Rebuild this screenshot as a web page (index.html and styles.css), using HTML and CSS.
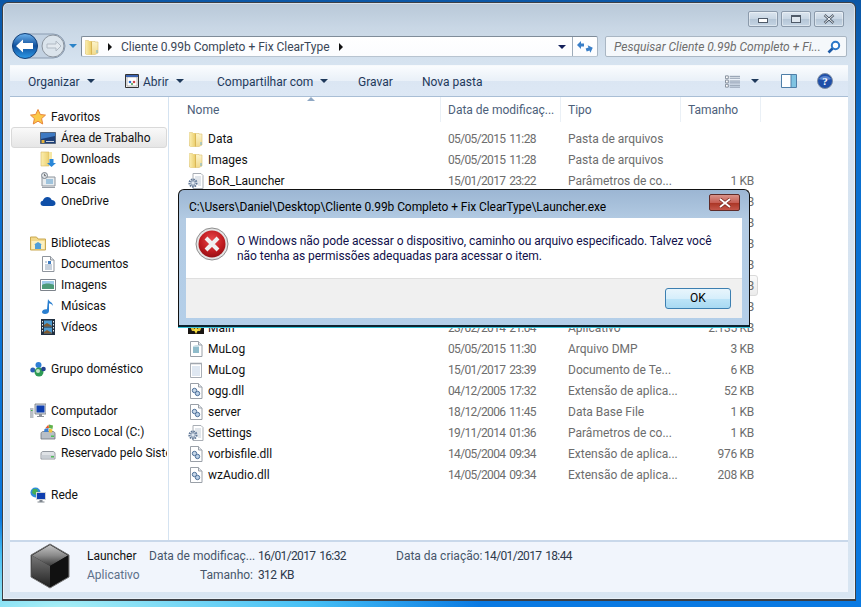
FILE: index.html
```html
<!DOCTYPE html>
<html lang="pt-BR">
<head>
<meta charset="utf-8">
<title>Cliente 0.99b Completo + Fix ClearType</title>
<link rel="stylesheet" href="styles.css">
</head>
<body>
<svg class="defs" width="0" height="0" aria-hidden="true">
  <defs>
    <linearGradient id="fy" x1="0" y1="0" x2="1" y2="0"><stop offset="0" stop-color="#fbeeb0"/><stop offset="1" stop-color="#ecd070"/></linearGradient>
    <linearGradient id="fy2" x1="0" y1="0" x2="0" y2="1"><stop offset="0" stop-color="#fdf6cf"/><stop offset="1" stop-color="#f1da8c"/></linearGradient>
    <radialGradient id="red" cx=".5" cy=".35" r=".7"><stop offset="0" stop-color="#e8484a"/><stop offset=".6" stop-color="#c01c20"/><stop offset="1" stop-color="#8f0d12"/></radialGradient>
    <linearGradient id="backb" x1="0" y1="0" x2="0" y2="1"><stop offset="0" stop-color="#6fb4ee"/><stop offset=".5" stop-color="#0f4f9c"/><stop offset="1" stop-color="#2f9be8"/></linearGradient>
    <linearGradient id="cube" x1="0" y1="0" x2="0" y2="1"><stop offset="0" stop-color="#c4c4c4"/><stop offset=".5" stop-color="#8a8a8a"/><stop offset="1" stop-color="#3a3a3a"/></linearGradient>
    <linearGradient id="cubel" x1="0" y1="0" x2="0" y2="1"><stop offset="0" stop-color="#777"/><stop offset="1" stop-color="#222"/></linearGradient>
    <symbol id="i-folder" viewBox="0 0 16 16"><path d="M1.500 1.500h3l.5 1h6v.5h3V14l-3 1.500H2.500L1.500 15z" fill="url(#fy2)" stroke="#dcc16e" stroke-width=".6"/><path d="M1.500 2h5.500v13.500H2z" fill="url(#fy)"/><path d="M7 2.500h1v13H7z" fill="#d9b655"/><path d="M13.500 11v3h-1v-3z" fill="#6fb4e0"/></symbol>
    <symbol id="i-gear" viewBox="0 0 16 16"><path d="M5 .5h8l2 2v13H5z" fill="#fff" stroke="#a9aeb5"/><path d="M7 4h6M7 6h6M9 8h4M10 10h3M10 12h3" stroke="#c3ccd6"/><circle cx="5" cy="10" r="3.600" fill="none" stroke="#5d7595" stroke-width="2" stroke-dasharray="1.600 .8"/><circle cx="5" cy="10" r="2.200" fill="#dfe7f0" stroke="#6d83a0" stroke-width=".8"/></symbol>
    <symbol id="i-dll" viewBox="0 0 16 16"><path d="M2.500 .5h8l3.500 3.500v11.500H2.500z" fill="#fff" stroke="#9aa0a8"/><path d="M10.500 .5v3.500H14" fill="#e6e9ee" stroke="#9aa0a8"/><circle cx="6.500" cy="7.500" r="2.200" fill="#c7d7e8" stroke="#4e7099"/><circle cx="9.500" cy="10.500" r="2.200" fill="#b9cfe6" stroke="#4e7099"/></symbol>
    <symbol id="i-dmp" viewBox="0 0 16 16"><path d="M2.500 .5h8l3.500 3.500v11.500H2.500z" fill="#fff" stroke="#9aa0a8"/><path d="M10.500 .5v3.500H14" fill="#e6e9ee" stroke="#9aa0a8"/><path d="M5 5h6v7H5z" fill="#8fbccb"/><path d="M5 5l3-1h3v2H5z" fill="#c9dee6"/></symbol>
    <symbol id="i-txt" viewBox="0 0 16 16"><path d="M2.500 1.500h11v14h-11z" fill="#fff" stroke="#a9aeb5"/><path d="M3 .5v2M5 .5v2M7 .5v2M9 .5v2M11 .5v2M13 .5v2" stroke="#9aa0a8"/><path d="M4 5h8M4 7h8M4 9h8M4 11h8M4 13h8" stroke="#bfd0e4"/></symbol>
    <symbol id="i-main" viewBox="0 0 16 16"><path d="M0 3h16v11H0z" fill="#191512"/><path d="M1 4l7 6 7-6-3 7H4z" fill="#e0c33b"/><path d="M8 7l2 3-2 4-2-4z" fill="#f3dc3f"/></symbol>
    <symbol id="i-exe" viewBox="0 0 16 16"><path d="M1.500 1.500h13v13h-13z" fill="#f4f4f4" stroke="#333"/><path d="M3 4h10v9H3z" fill="#fff" stroke="#8a8a8a" stroke-width=".6"/><path d="M2 2h12v2H2z" fill="#3a62b0"/><circle cx="6" cy="9" r="1.300" fill="#2b6fd0"/><circle cx="10" cy="9" r="1.300" fill="#d04848"/><circle cx="8" cy="11" r="1" fill="#3c9b4a"/></symbol>
    <symbol id="i-star" viewBox="0 0 16 16"><path d="M8 .5l2.300 5 5.200.6-3.900 3.500 1.100 5.400L8 12.200l-4.700 2.800 1.100-5.400L.5 6.100l5.200-.6z" fill="#fbc94a" stroke="#e8853a"/></symbol>
    <symbol id="i-desk" viewBox="0 0 16 16"><path d="M.5 2.500h15v11H.5z" fill="#1d3f78" stroke="#54657c"/><path d="M1 3h14v3L1 9z" fill="#3d79c2"/><path d="M6 11h8v1H6z" fill="#c8d2de"/><path d="M1.500 10h3v3h-3z" fill="#e5b23a"/></symbol>
    <symbol id="i-down" viewBox="0 0 16 16"><path d="M1 1h8v14H1z" fill="url(#fy)" stroke="#d8bb63" stroke-width=".6"/><path d="M9 1h3v7H9z" fill="#f6e7a6"/><path d="M9.500 8h4v4H16l-4.500 4L7 12h2.500z" fill="#2a87d8"/></symbol>
    <symbol id="i-places" viewBox="0 0 16 16"><path d="M2 5h13v9H2z" fill="#e8ecef" stroke="#8d949c"/><path d="M6 7h7v5H6z" fill="#9fc3dc"/><path d="M2 15h13v1H2z" fill="#9aa0a8"/><circle cx="4.500" cy="3.500" r="3" fill="#dfe3e7" stroke="#7d858e"/><path d="M4.500 1.800v1.900h1.500" fill="none" stroke="#444" stroke-width=".7"/></symbol>
    <symbol id="i-cloud" viewBox="0 0 16 16"><path d="M3.500 13C1.500 13 .5 11.700.5 10.300.5 9 1.500 8 2.800 7.800 3.500 5.500 5.300 4 7.500 4c2 0 3.500 1 4.200 3 2.100 0 3.800 1.400 3.800 3.200 0 1.700-1.300 2.800-3 2.800z" fill="#0f4fa8"/></symbol>
    <symbol id="i-libs" viewBox="0 0 16 16"><path d="M.5 2h6l1.500 2h7.500v11H.5z" fill="#f3d98a" stroke="#c9a850"/><path d="M1.500 6h13v8h-13z" fill="#fbf0c0"/><path d="M5 14V9.500h6V14M4 9.500L8 7l4 2.500z" fill="#4f9fd8"/></symbol>
    <symbol id="i-doc" viewBox="0 0 16 16"><path d="M2.500 .5h8l3.500 3.500v11.500H2.500z" fill="#fff" stroke="#8f959d"/><path d="M10.500.5v3.500H14" fill="#dfe3e8" stroke="#8f959d"/><path d="M8 5h3v3H8z" fill="#3f7cc0"/><path d="M5 9h7M5 11h7M5 13h7M5 6h2" stroke="#8fa3bb"/></symbol>
    <symbol id="i-img" viewBox="0 0 16 16"><path d="M.5 2.500h15v11H.5z" fill="#fff" stroke="#7d838b"/><path d="M2 4h12v4H2z" fill="#9fcbe8"/><path d="M2 8c3-2 8-2 12 0v4H2z" fill="#4c9b78"/></symbol>
    <symbol id="i-music" viewBox="0 0 16 16"><path d="M8 1c1 3 5 3 5 7-1-2-3-2.500-4-2.500V13c0 1.700-1.800 3-4 3-1.700 0-3-.8-3-2 0-1.500 1.800-2.800 4-2.800.4 0 .8 0 1 .1z" fill="#2a7fd0"/></symbol>
    <symbol id="i-film" viewBox="0 0 16 16"><path d="M1 0h14v16H1z" fill="#223041"/><path d="M4 1.500h8v6H4zM4 8.500h8v6H4z" fill="#4d9ad0"/><path d="M4 6l3-2 5 3v.5H4zM4 13l3-2 5 3v.500H4z" fill="#7f5a30"/><path d="M2 2h1v1.500H2zM2 5h1v1.500H2zM2 8h1v1.500H2zM2 11h1v1.500H2zM13 2h1v1.500h-1zM13 5h1v1.500h-1zM13 8h1v1.500h-1zM13 11h1v1.500h-1z" fill="#e8eef4"/></symbol>
    <symbol id="i-home" viewBox="0 0 16 16"><circle cx="2.800" cy="9" r="2.500" fill="#2a5fb5"/><circle cx="8.500" cy="4" r="3" fill="#2f7fd6"/><circle cx="9" cy="11" r="4.500" fill="#2f9b55"/><circle cx="13.500" cy="8" r="2.300" fill="#23408f"/><circle cx="8" cy="10" r="2" fill="#c5e6c8"/></symbol>
    <symbol id="i-pc" viewBox="0 0 16 16"><path d="M5 1h11v10H5z" fill="#d9dde2" stroke="#6f767e" stroke-width=".8"/><path d="M6.500 2.500h8v7h-8z" fill="#0f3fb0"/><path d="M9 11h3v2h2v1H7v-1h2z" fill="#8b9199"/><path d="M0 5h3.500v10H0z" fill="#b9bfc5"/><path d="M1 7h1.500v1H1z" fill="#3cae4a"/></symbol>
    <symbol id="i-disk" viewBox="0 0 16 16"><path d="M1 9.500c0-1 1-2 2-2h10c1 0 2 1 2 2V15H1z" fill="#b8bfc7" stroke="#6c737b" stroke-width=".8"/><path d="M11 11.500h3V13h-3z" fill="#4bbf58"/><path d="M5 4.500L8.500 .5 9 4z" fill="#e45a2e"/><path d="M9 .5l4 1-.5 3.500-3.500-1z" fill="#62b24c"/><path d="M4.500 5L8.500 4 8.500 8 4 8z" fill="#3d80d0"/><path d="M9 4.500l3.500 1-.5 3H8.800z" fill="#f2c33a"/></symbol>
    <symbol id="i-disk2" viewBox="0 0 16 16"><path d="M1 8.500c0-1 1-2 2-2h10c1 0 2 1 2 2V14H1z" fill="#dfe2e6" stroke="#7b8289" stroke-width=".8"/><path d="M1.500 10h13v3.500h-13z" fill="#c9ced4"/><path d="M11 11h3v1.500h-3z" fill="#52b85c"/></symbol>
    <symbol id="i-net" viewBox="0 0 16 16"><circle cx="5.500" cy="5.500" r="5" fill="#2e8dd8"/><path d="M3 2l4 0 1 3-3 3-3-2z" fill="#46ae52"/><path d="M6 5h10v8H6z" fill="#cfd4da"/><path d="M7 6h8v6H7z" fill="#0f3fb0"/><path d="M9.500 13h3v1.500h2v1h-7v-1h2z" fill="#7f868e"/></symbol>
  </defs>
</svg>

<main class="window">
  <div class="caption">
    <div class="caption-btn"><span class="glyph-min"></span></div>
    <div class="caption-btn"><span class="glyph-max"></span></div>
    <div class="caption-btn caption-x">
      <svg width="12" height="10" viewBox="0 0 12 10"><path d="M1.500 1l9 8M10.500 1l-9 8" stroke="#4f5a68" stroke-width="2.400"/><path d="M1.500 1l9 8M10.500 1l-9 8" stroke="#f2f5f8" stroke-width="1"/></svg>
    </div>
  </div>

  <div class="nav">
    <div class="nav-buttons">
      <svg width="68" height="28" viewBox="0 0 68 28">
        <path d="M14 2h28a11 11 0 0 1 0 24H14z" fill="#c3d2e2" stroke="#8a9bb0"/>
        <circle cx="14" cy="14" r="12.500" fill="url(#backb)" stroke="#123f78"/>
        <path d="M5 14l7-6.500V11h10v6H12v3.500z" fill="#fff"/>
        <circle cx="42" cy="14" r="11" fill="#dbe4ec" stroke="#8b949e"/>
        <path d="M50 14l-5-5v3h-9v4h9v3z" fill="#e3e9ef" stroke="#b1bac4"/>
        <path d="M58 12h8l-4 4z" fill="#2a83c8"/>
      </svg>
    </div>
    <div class="address">
      <svg class="ic addr-folder" width="16" height="16"><use href="#i-folder"/></svg>
      <span class="crumb-arrow first"></span>
      <span class="crumb">Cliente 0.99b Completo + Fix ClearType</span>
      <span class="crumb-arrow"></span>
      <span class="spacer"></span>
      <span class="drop-arrow"></span>
      <span class="refresh">
        <svg width="16" height="14" viewBox="0 0 16 14"><path d="M0 5l4-4v2.500h3v3H4V9z" fill="#3a7fc8"/><path d="M16 9l-4 4v-2.500H9v-3h3V5z" fill="#3a7fc8" transform="rotate(-20 12 9)"/></svg>
      </span>
    </div>
    <div class="search">
      <span class="search-text">Pesquisar Cliente 0.99b Completo + Fi...</span>
      <svg width="14" height="14" viewBox="0 0 14 14"><circle cx="8.500" cy="5.500" r="3.700" fill="#fff" stroke="#2c78c8" stroke-width="2"/><path d="M5.500 8.500L1.500 12.500" stroke="#1d5aa6" stroke-width="2.600"/></svg>
    </div>
  </div>

  <div class="toolbar">
    <div class="tool t-org">Organizar<span class="tri"></span></div>
    <div class="tool t-open"><svg class="ic" width="16" height="16"><use href="#i-exe"/></svg><span class="open-label">Abrir</span><span class="tri"></span></div>
    <div class="tool t-share">Compartilhar com<span class="tri"></span></div>
    <div class="tool t-burn">Gravar</div>
    <div class="tool t-new">Nova pasta</div>
    <span class="spacer"></span>
    <svg class="view-ic" width="15" height="13" viewBox="0 0 16 13"><path d="M.5.500h3v3h-3zM.5 5h3v3h-3zM.5 9.500h3v3h-3z" fill="#fff" stroke="#7f8a98"/><path d="M5 1h11M5 3h11M5 6h11M5 8h11M5 10.500h11M5 12.500h11" stroke="#8593a5"/></svg>
    <span class="tri view-tri"></span>
    <svg class="pane-ic" width="16" height="14" viewBox="0 0 16 14"><path d="M.5.500h15v13H.5z" fill="#fff" stroke="#4f7fa8"/><path d="M10 1h5v12h-5z" fill="#7fc3e2"/><path d="M10 .5v13" stroke="#4f7fa8"/></svg>
    <svg class="help-ic" width="16" height="16" viewBox="0 0 16 16"><circle cx="8" cy="8" r="7.500" fill="#1f4fa8" stroke="#7f8ea3"/><path d="M2 6c2-4 10-4 12 0-3 1.500-9 1.500-12 0z" fill="#5a85cf"/><text class="help-q" x="8" y="12" text-anchor="middle">?</text></svg>
  </div>

  <div class="body">
    <nav class="sidebar">
      <div class="group">
        <div class="nav-head"><svg class="ic" width="16" height="16"><use href="#i-star"/></svg>Favoritos</div>
        <div class="nav-item selected"><svg class="ic" width="16" height="16"><use href="#i-desk"/></svg>Área de Trabalho</div>
        <div class="nav-item"><svg class="ic" width="16" height="16"><use href="#i-down"/></svg>Downloads</div>
        <div class="nav-item"><svg class="ic" width="16" height="16"><use href="#i-places"/></svg>Locais</div>
        <div class="nav-item"><svg class="ic" width="16" height="16"><use href="#i-cloud"/></svg>OneDrive</div>
      </div>
      <div class="group">
        <div class="nav-head"><svg class="ic" width="16" height="16"><use href="#i-libs"/></svg>Bibliotecas</div>
        <div class="nav-item"><svg class="ic" width="16" height="16"><use href="#i-doc"/></svg>Documentos</div>
        <div class="nav-item"><svg class="ic" width="16" height="16"><use href="#i-img"/></svg>Imagens</div>
        <div class="nav-item"><svg class="ic" width="16" height="16"><use href="#i-music"/></svg>Músicas</div>
        <div class="nav-item"><svg class="ic" width="16" height="16"><use href="#i-film"/></svg>Vídeos</div>
      </div>
      <div class="group">
        <div class="nav-head"><svg class="ic" width="16" height="16"><use href="#i-home"/></svg>Grupo doméstico</div>
      </div>
      <div class="group">
        <div class="nav-head"><svg class="ic" width="16" height="16"><use href="#i-pc"/></svg>Computador</div>
        <div class="nav-item"><svg class="ic" width="16" height="16"><use href="#i-disk"/></svg>Disco Local (C:)</div>
        <div class="nav-item"><svg class="ic" width="16" height="16"><use href="#i-disk2"/></svg>Reservado pelo Sistema</div>
      </div>
      <div class="group">
        <div class="nav-head"><svg class="ic" width="16" height="16"><use href="#i-net"/></svg>Rede</div>
      </div>
    </nav>

    <section class="files">
      <div class="list-head">
        <span class="sort-tri"></span>
        <div class="hcell">Nome</div>
        <div class="hcell">Data de modificaç...</div>
        <div class="hcell">Tipo</div>
        <div class="hcell">Tamanho</div>
      </div>
      <div class="row"><div class="name"><svg class="ic" width="16" height="16"><use href="#i-folder"/></svg>Data</div><div class="meta date">05/05/2015 11:28</div><div class="meta">Pasta de arquivos</div><div class="size"></div></div>
      <div class="row"><div class="name"><svg class="ic" width="16" height="16"><use href="#i-folder"/></svg>Images</div><div class="meta date">05/05/2015 11:28</div><div class="meta">Pasta de arquivos</div><div class="size"></div></div>
      <div class="row"><div class="name"><svg class="ic" width="16" height="16"><use href="#i-gear"/></svg>BoR_Launcher</div><div class="meta date">15/01/2017 23:22</div><div class="meta">Parâmetros de co...</div><div class="size">1 KB</div></div>
      <div class="row"><div class="size-only">1 KB</div></div>
      <div class="row"><div class="size-only">1 KB</div></div>
      <div class="row"><div class="size-only">1 KB</div></div>
      <div class="row"><div class="size-only">1 KB</div></div>
      <div class="row row-sel"><div class="size-only">312 KB</div></div>
      <div class="row"><div class="size-only">1 KB</div></div>
      <div class="row"><div class="name"><svg class="ic" width="16" height="16"><use href="#i-main"/></svg>Main</div><div class="meta date">23/02/2014 21:04</div><div class="meta">Aplicativo</div><div class="size">2.135 KB</div></div>
      <div class="row"><div class="name"><svg class="ic" width="16" height="16"><use href="#i-dmp"/></svg>MuLog</div><div class="meta date">05/05/2015 11:30</div><div class="meta">Arquivo DMP</div><div class="size">3 KB</div></div>
      <div class="row"><div class="name"><svg class="ic" width="16" height="16"><use href="#i-txt"/></svg>MuLog</div><div class="meta date">15/01/2017 23:39</div><div class="meta">Documento de Te...</div><div class="size">6 KB</div></div>
      <div class="row"><div class="name"><svg class="ic" width="16" height="16"><use href="#i-dll"/></svg>ogg.dll</div><div class="meta date">04/12/2005 17:32</div><div class="meta">Extensão de aplica...</div><div class="size">52 KB</div></div>
      <div class="row"><div class="name"><svg class="ic" width="16" height="16"><use href="#i-dll"/></svg>server</div><div class="meta date">18/12/2006 11:45</div><div class="meta">Data Base File</div><div class="size">1 KB</div></div>
      <div class="row"><div class="name"><svg class="ic" width="16" height="16"><use href="#i-gear"/></svg>Settings</div><div class="meta date">19/11/2014 01:36</div><div class="meta">Parâmetros de co...</div><div class="size">1 KB</div></div>
      <div class="row"><div class="name"><svg class="ic" width="16" height="16"><use href="#i-dll"/></svg>vorbisfile.dll</div><div class="meta date">14/05/2004 09:34</div><div class="meta">Extensão de aplica...</div><div class="size">976 KB</div></div>
      <div class="row"><div class="name"><svg class="ic" width="16" height="16"><use href="#i-dll"/></svg>wzAudio.dll</div><div class="meta date">14/05/2004 09:34</div><div class="meta">Extensão de aplica...</div><div class="size">208 KB</div></div>
    </section>
  </div>

  <footer class="details">
    <svg class="cube" width="42" height="46" viewBox="0 0 42 46">
      <path d="M21 1l19 11v22L21 45 2 34V12z" fill="#1c1c1c" stroke="#777"/>
      <path d="M21 2l18 10.500L21 23 3 12.500z" fill="url(#cube)"/>
      <path d="M21 23v21L3 33.500v-21z" fill="url(#cubel)"/>
      <path d="M21 23v21l18-10.500v-21z" fill="#111"/>
    </svg>
    <div class="d-col d-name"><div class="d-title">Launcher</div><div class="d-sub">Aplicativo</div></div>
    <div class="d-col d-labels"><div>Data de modificaç...</div><div>Tamanho:</div></div>
    <div class="d-col d-values"><div>16/01/2017 16:32</div><div>312 KB</div></div>
    <div class="d-col d-labels2"><div>Data da criação:</div></div>
    <div class="d-col d-values"><div>14/01/2017 18:44</div></div>
  </footer>
</main>

<section class="dialog">
  <div class="dlg-title">
    <span class="dlg-path">C:\Users\Daniel\Desktop\Cliente 0.99b Completo + Fix ClearType\Launcher.exe</span>
    <span class="dlg-close"><svg width="14" height="10" viewBox="0 0 14 10"><path d="M2 1l10 8M12 1L2 9" stroke="#7a2a22" stroke-width="3.400"/><path d="M2 1l10 8M12 1L2 9" stroke="#fff" stroke-width="1.800"/></svg></span>
  </div>
  <div class="dlg-inner">
    <div class="dlg-msg">
      <svg width="34" height="34" viewBox="0 0 34 34" class="dlg-ic"><circle cx="17" cy="17" r="16" fill="#e4e4e4" stroke="#8f8f8f"/><circle cx="17" cy="17" r="13.500" fill="url(#red)"/><path d="M11 11l12 12M23 11L11 23" stroke="#f0f0f0" stroke-width="4"/></svg>
      <p class="dlg-text">O Windows não pode acessar o dispositivo, caminho ou arquivo especificado. Talvez você<br>não tenha as permissões adequadas para acessar o item.</p>
    </div>
    <div class="dlg-foot"><button class="ok" type="button">OK</button></div>
  </div>
</section>
</body>
</html>
```
FILE: styles.css
```css
* { box-sizing: border-box; }
html, body { margin: 0; height: 100%; }
body {
  width: 861px;
  height: 607px;
  overflow: hidden;
  position: relative;
  font: 12px/15px Roboto, "Noto Sans", sans-serif;
  color: #000;
  background:
    radial-gradient(ellipse 420px 90px at 60px 607px, #a6eef5 0%, #45bff5 60%, rgba(40,150,235,0) 100%),
    linear-gradient(to bottom, #0b57a6 0%, #0a6fcf 25%, #0a7ae2 100%);
}
.defs { position: absolute; }
.ic { flex: none; display: block; }
.spacer { flex: 1; }

.window {
  position: absolute;
  left: 2px;
  top: 2px;
  width: 854px;
  height: 599px;
  display: flex;
  flex-direction: column;
  padding: 0 7px 7px 7px;
  border: 1px solid #3c4046;
  border-bottom-width: 2px;
  border-radius: 6px 6px 0 0;
  background: linear-gradient(to bottom, #b8c8d8 0, #c9d7e5 25px, #d6e3f0 60px, #d8e5f2 100%);
  box-shadow: inset 0 0 0 1px rgba(255,255,255,.45);
}

.caption { height: 24px; padding-top: 8px; display: flex; justify-content: flex-end; gap: 3px; padding-right: 4px; }
.caption-btn {
  width: 30px;
  height: 16px;
  border: 1px solid #8b9aab;
  border-radius: 2px;
  display: flex;
  align-items: center;
  justify-content: center;
  background: linear-gradient(to bottom, #dbe5ef 0, #c8d6e4 50%, #b4c5d6 51%, #c5d5e4 100%);
  box-shadow: inset 0 0 0 1px rgba(255,255,255,.4);
}
.glyph-min { width: 10px; height: 5px; margin-top: 3px; border: 1px solid #4f5a68; background: #fff; }
.glyph-max { width: 10px; height: 8px; border: 1px solid #4f5a68; border-top-width: 2px; background: #dfe7ef; }

.nav { height: 38px; display: flex; align-items: flex-start; padding-top: 9px; }
.nav-buttons { width: 70px; margin-top: -4px; flex: none; margin-left: 1px; }
.address {
  width: 517px;
  height: 21px;
  flex: none;
  display: flex;
  align-items: center;
  background: linear-gradient(to bottom, #fff, #fbfcfe);
  border: 1px solid #7f8c99;
  border-right-color: #a8b5c3;
  border-bottom-color: #b8c4d0;
  border-radius: 2px;
  color: #3a4656;
  padding-left: 2px;
}
.addr-folder { margin-right: 4px; }
.crumb-arrow { width: 0; height: 0; border-left: 4px solid #111; border-top: 4px solid transparent; border-bottom: 4px solid transparent; }
.crumb-arrow.first { margin: 0 9px 0 4px; }
.crumb { margin-right: 9px; padding-top: 2px; letter-spacing: -.02px; white-space: nowrap; }
.drop-arrow { width: 0; height: 0; border-top: 4px solid #14205a; border-left: 4px solid transparent; border-right: 4px solid transparent; margin-right: 6px; }
.refresh { width: 25px; height: 19px; border-left: 1px solid #9eacba; display: flex; align-items: center; justify-content: center; }
.search {
  width: 242px;
  height: 21px;
  margin-left: 7px;
  flex: none;
  display: flex;
  align-items: center;
  justify-content: space-between;
  padding: 0 5px 0 8px;
  background: #f5f8fb;
  border: 1px solid #a9b6c3;
  border-radius: 2px;
  color: #6d6d6d;
  font-style: italic;
  white-space: nowrap;
}
.search-text { padding-top: 2px; }

.toolbar {
  height: 32px;
  display: flex;
  align-items: center;
  color: #1e395b;
  border-top: 1px solid #f6f9fc;
  border-bottom: 1px solid #a9bed5;
  background: linear-gradient(to bottom, #fafcfe 0, #e9f0f8 50%, #dbe6f3 51%, #dde8f5 100%);
}
.tool { display: flex; align-items: center; white-space: nowrap; padding-top: 2px; }
.tool .ic, .tool .tri { margin-bottom: 2px; }
.t-org { margin-left: 18px; width: 96px; }
.t-open { width: 93px; }
.open-label { margin-left: 3px; }
.t-share { width: 141px; }
.t-burn { width: 64px; }
.tri { width: 0; height: 0; margin-left: 7px; border-top: 4px solid #1e395b; border-left: 4px solid transparent; border-right: 4px solid transparent; }
.view-ic { margin-right: 11px; }
.view-tri { margin: 0 22px 0 0; }
.pane-ic { margin-right: 20px; }
.help-ic { margin-right: 15px; }
.help-q { font: bold 11px "Liberation Serif", serif; fill: #fff; }

.body { flex: 1; min-height: 0; display: flex; background: #fff; }
.sidebar {
  width: 159px;
  flex: none;
  padding-top: 9px;
  background: #fff;
  border-right: 1px solid #d5e3f1;
  overflow: hidden;
  color: #111;
}
.group { margin-bottom: 21px; }
.nav-head { height: 21px; display: flex; align-items: center; gap: 5px; padding: 2px 0 0 20px; white-space: nowrap; }
.nav-item { height: 21px; margin: 0 1px; display: flex; align-items: center; gap: 5px; padding: 2px 0 0 29px; letter-spacing: -.05px; white-space: nowrap; overflow: hidden; }
.nav-head .ic, .nav-item .ic { margin-bottom: 2px; }
.nav-item.selected {
  border: 1px solid #d9d9d9;
  border-radius: 3px;
  padding-left: 28px;
  background: linear-gradient(to bottom, #f9f9f9, #e6e6e6);
}

.files { flex: 1; position: relative; background: #fff; color: #111; padding-bottom: 8px; }
.list-head { height: 31px; display: grid; grid-template-columns: 272px 120px 120px 80px; position: relative; color: #4c607a; }
.hcell { height: 25px; padding: 6px 0 0 7px; border-right: 1px solid #eaf0f6; }
.hcell:first-of-type { padding-left: 18px; }
.sort-tri { position: absolute; left: 138px; top: 0; width: 0; height: 0; border-bottom: 4px solid #8fa8c4; border-left: 4px solid transparent; border-right: 4px solid transparent; }
.row { height: 21px; display: grid; grid-template-columns: 272px 120px 120px 80px; align-items: center; }
.name { display: flex; align-items: center; gap: 4px; padding: 2px 0 0 19px; white-space: nowrap; }
.name .ic { margin-bottom: 2px; }
.meta { padding: 2px 0 0 7px; color: #6d6d6d; white-space: nowrap; overflow: hidden; }
.date { letter-spacing: -.65px; word-spacing: 1.5px; }
.size, .size-only { text-align: right; padding: 2px 7px 0 0; color: #6d6d6d; letter-spacing: -.3px; }
.size-only { grid-column: 4; }
.row-sel { width: 579px; margin-left: 10px; grid-template-columns: 261px 120px 120px 80px; border: 1px solid #d9d9d9; border-radius: 3px; background: linear-gradient(to bottom, #fafafa, #ebebeb); }

.details {
  height: 52px;
  flex: none;
  display: flex;
  align-items: flex-start;
  background: #f1f5fc;
  border-top: 2px solid #c9d8ea;
  padding-top: 1px;
  color: #46556a;
}
.cube { margin-left: 19px; margin-right: 16px; flex: none; }
.d-col { padding-top: 4px; line-height: 19px; white-space: nowrap; }
.d-name { width: 62px; }
.d-title { color: #111; }
.d-sub { color: #5d7089; }
.d-labels { width: 104px; text-align: right; margin-right: 5px; }
.d-labels2 { margin-left: 37px; width: 88px; }
.d-values { color: #2d3a4c; width: 101px; letter-spacing: -.65px; word-spacing: 1.5px; }

.dialog {
  position: absolute;
  left: 178px;
  top: 189px;
  width: 572px;
  height: 138px;
  padding: 0 7px 7px;
  border: 1px solid #111;
  border-bottom: 2px solid #0d2430;
  border-radius: 6px 6px 0 0;
  background: linear-gradient(to bottom, #9cb6d3 0, #b3cbe3 30px, #b4cfe9 100%);
  display: flex;
  flex-direction: column;
  box-shadow: 0 1px 0 #3ac3d9;
}
.dlg-title { height: 28px; flex: none; display: flex; align-items: center; justify-content: space-between; padding: 7px 2px 0 3px; white-space: nowrap; }
.dlg-path { letter-spacing: -.08px; }
.dlg-close {
  width: 31px;
  height: 17px;
  margin-top: -10px;
  display: flex;
  align-items: center;
  justify-content: center;
  border: 1px solid #5f2b28;
  border-radius: 2px;
  background: linear-gradient(to bottom, #d9938a 0, #c75f55 50%, #a93322 51%, #c4574b 100%);
}
.dlg-inner { flex: 1; display: flex; flex-direction: column; min-height: 0; }
.dlg-msg { height: 61px; flex: none; display: flex; align-items: flex-start; padding: 9px 0 0 9px; background: #fff; border-bottom: 1px solid #dfdfdf; }
.dlg-ic { flex: none; margin-right: 8px; }
.dlg-text { margin: 7px 0 0; color: #10104a; letter-spacing: -.05px; white-space: nowrap; }
.dlg-foot { flex: 1; display: flex; justify-content: flex-end; align-items: flex-start; padding: 9px 11px 0 0; background: #f0f0f0; }
.ok {
  width: 66px;
  height: 21px;
  padding: 0;
  font: inherit;
  color: #000;
  border: 1px solid #3c7fb1;
  border-radius: 3px;
  background: linear-gradient(to bottom, #e8f5fc 0, #d6eefb 50%, #bde4f8 51%, #a8d9f2 100%);
}
```
